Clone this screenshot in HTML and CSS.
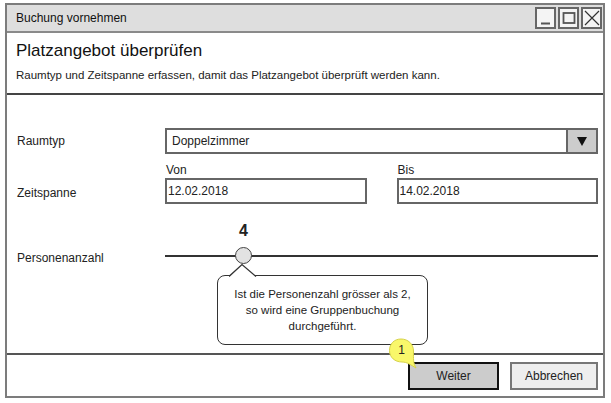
FILE: index.html
```html
<!DOCTYPE html>
<html lang="de">
<head>
<meta charset="utf-8">
<title>Buchung vornehmen</title>
<link rel="stylesheet" href="styles.css">
</head>
<body>
<div class="window">
  <div class="titlebar">
    <span class="title">Buchung vornehmen</span>
    <div class="winbtns">
      <span class="winbtn"><svg width="16" height="16" viewBox="0 0 16 16"><path d="M3 13.5 H12" stroke="#555" stroke-width="2"/></svg></span>
      <span class="winbtn"><svg width="16" height="16" viewBox="0 0 16 16"><rect x="2.5" y="3" width="11" height="10" fill="none" stroke="#555" stroke-width="1.8"/></svg></span>
      <span class="winbtn"><svg width="16" height="16" viewBox="0 0 16 16"><path d="M1 1 L15 15 M15 1 L1 15" stroke="#333" stroke-width="1.2"/></svg></span>
    </div>
  </div>
  <div class="header">
    <h1 class="heading">Platzangebot überprüfen</h1>
    <p class="subtext">Raumtyp und Zeitspanne erfassen, damit das Platzangebot überprüft werden kann.</p>
  </div>
  <div class="form">
    <div class="row row-type">
      <span class="label">Raumtyp</span>
      <div class="select">
        <span class="select-text">Doppelzimmer</span>
        <span class="select-arrow"><svg width="10" height="9" viewBox="0 0 10 9"><path d="M0 0 H10 L5 9 Z" fill="#111"/></svg></span>
      </div>
    </div>
    <div class="row row-dates">
      <span class="label label-dates">Zeitspanne</span>
      <div class="dates">
        <div class="date">
          <span class="date-label">Von</span>
          <div class="input">12.02.2018</div>
        </div>
        <div class="date">
          <span class="date-label">Bis</span>
          <div class="input">14.02.2018</div>
        </div>
      </div>
    </div>
    <div class="row row-slider">
      <span class="label label-slider">Personenanzahl</span>
      <div class="slider">
        <span class="slider-value">4</span>
        <div class="slider-line"><span class="knob"></span></div>
      </div>
    </div>
  </div>
  <div class="footer">
    <button class="btn btn-primary">Weiter</button>
    <button class="btn">Abbrechen</button>
  </div>

  <div class="callout">
    <svg class="callout-pointer" width="30" height="14" viewBox="0 0 30 14"><path d="M0 13.5 L13 1.5 L27 13.5" fill="#fff" stroke="#333" stroke-width="1.3"/></svg>
    <p class="callout-text">Ist die Personenzahl grösser als 2, so wird eine Gruppenbuchung durchgeführt.</p>
  </div>

  <div class="badge">
    <svg width="30" height="32" viewBox="0 0 30 32"><path d="M13 2 C6 2 1.5 7 1.5 13.5 C1.5 20.5 7 25 14 25 C19 25 23 28 28 31 C25 26 25.5 22 25.5 14 C25.5 7 20 2 13 2 Z" fill="#f9f76a" stroke="#d6d24a" stroke-width="1"/></svg>
    <span class="badge-num">1</span>
  </div>
</div>
</body>
</html>
```

FILE: styles.css
```css
* { box-sizing: border-box; }
html, body { margin: 0; padding: 0; background: #fff; }
body {
  font-family: "Liberation Sans", Arial, sans-serif;
  color: #222;
  font-size: 12px;
}
.window {
  position: relative;
  margin: 3px 0 0 5px;
  width: 600px;
  height: 395px;
  border: 2px solid #7c7c7c;
  display: flex;
  flex-direction: column;
}
.titlebar {
  height: 28px;
  background: #dedede;
  border-bottom: 2px solid #8a8a8a;
  display: flex;
  align-items: center;
  justify-content: space-between;
  padding: 0 1px 0 9px;
}
.title { font-size: 12px; color: #111; }
.winbtns { display: flex; gap: 2px; }
.winbtn {
  width: 21px;
  height: 22px;
  border: 2px solid #666;
  background: #f4f4f4;
  display: flex;
  align-items: center;
  justify-content: center;
}
.header {
  height: 62px;
  border-bottom: 2px solid #444;
  padding: 7px 10px 0 9px;
}
.heading {
  margin: 0;
  font-weight: normal;
  font-size: 17px;
  line-height: 22px;
  color: #111;
}
.subtext {
  margin: 6px 0 0;
  font-size: 11.5px;
  line-height: 14px;
  color: #222;
}
.form {
  flex: 1;
  padding: 33px 5px 0 10px;
  display: flex;
  flex-direction: column;
}
.row {
  display: grid;
  grid-template-columns: 148px 1fr;
}
.label { font-size: 12px; color: #222; align-self: center; }
.select {
  height: 26px;
  border: 2px solid #666;
  display: flex;
  align-items: stretch;
}
.select-text { flex: 1; padding-left: 5px; display: flex; align-items: center; }
.select-arrow {
  width: 30px;
  background: #cccccc;
  border-left: 2px solid #666;
  display: flex;
  align-items: center;
  justify-content: center;
}
.row-dates { margin-top: 9px; }
.label-dates { align-self: end; padding-bottom: 4px; }
.dates {
  display: grid;
  grid-template-columns: 1fr 1fr;
  column-gap: 30px;
}
.date { display: flex; flex-direction: column; }
.date-label { line-height: 15px; padding-left: 1px; }
.input {
  height: 26px;
  border: 2px solid #666;
  display: flex;
  align-items: center;
  padding-left: 1px;
}
.row-slider { margin-top: 18px; }
.label-slider { align-self: end; margin-bottom: -8px; }
.slider { display: flex; flex-direction: column; }
.slider-value {
  font-weight: bold;
  font-size: 16px;
  line-height: 18px;
  padding-left: 74px;
}
.slider-line {
  position: relative;
  margin-top: 15px;
  height: 2px;
  background: #333;
}
.knob {
  position: absolute;
  left: 70px;
  top: -8px;
  width: 17px;
  height: 17px;
  border-radius: 50%;
  background: #e2e2e2;
  border: 1.5px solid #444;
}
.footer {
  height: 43px;
  border-top: 2px solid #555;
  display: flex;
  justify-content: flex-end;
  align-items: flex-start;
  gap: 11px;
  padding: 7px 5px 0 0;
}
.btn {
  font-family: inherit;
  font-size: 12px;
  height: 28px;
  width: 88px;
  background: #eeeeee;
  border: 2px solid #777;
  color: #222;
  padding: 0;
}
.btn-primary {
  width: 91px;
  background: #cccccc;
  border: 2.5px solid #111;
}
.callout {
  position: absolute;
  left: 210px;
  top: 270px;
  width: 211px;
  height: 70px;
  border: 1.4px solid #333;
  border-radius: 8px;
  background: #fff;
  display: flex;
  align-items: center;
  justify-content: center;
}
.callout-pointer {
  position: absolute;
  left: 11px;
  top: -13px;
}
.callout-text {
  margin: 0;
  text-align: center;
  font-size: 11.5px;
  line-height: 16px;
  padding: 0 10px;
}
.badge {
  position: absolute;
  left: 381px;
  top: 332px;
  width: 30px;
  height: 32px;
}
.badge svg { position: absolute; left: 0; top: 0; }
.badge-num {
  position: absolute;
  left: 0;
  top: 5px;
  width: 27px;
  text-align: center;
  font-size: 12px;
  line-height: 16px;
}
```
